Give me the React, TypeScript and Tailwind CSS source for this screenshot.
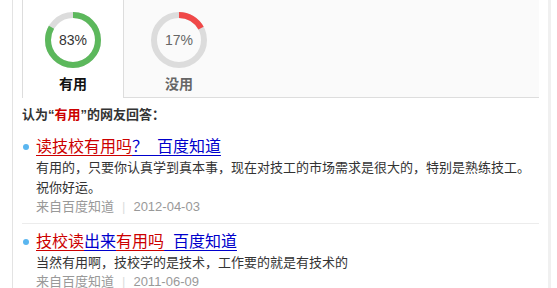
import React from 'react';

const FONT = { fontFamily: '"Liberation Sans", "Noto Sans CJK SC", sans-serif' };

const Donut = ({ pct, color, textColor }: { pct: number; color: string; textColor: string }) => {
  const r = 25;
  const c = 2 * Math.PI * r;
  return (
    <div className="relative w-[56px] h-[56px]">
      <svg width="56" height="56" viewBox="0 0 56 56">
        <circle cx="28" cy="28" r={r} fill="none" stroke="#dcdcdc" strokeWidth="6" />
        <circle
          cx="28"
          cy="28"
          r={r}
          fill="none"
          stroke={color}
          strokeWidth="6"
          strokeDasharray={`${(c * pct) / 100} ${c}`}
          transform="rotate(-90 28 28)"
        />
      </svg>
      <div className={`absolute inset-0 flex items-center justify-center text-[14px] ${textColor}`}>{pct}%</div>
    </div>
  );
};

type Part = { t: string; red?: boolean };

const Item = ({ title, body, date, last }: { title: Part[]; body: string; date: string; last?: boolean }) => (
  <div className={`pl-[14px] ${last ? '' : 'pb-[7px] border-b border-[#ececec]'}`}>
    <div className="flex items-center -ml-[14px]">
      <span className="w-[14px] flex">
        <span className="ml-[1px] w-[6px] h-[6px] rounded-full bg-[#5ab6f0]" />
      </span>
      <a className="text-[16px] leading-[22px] whitespace-pre">
        {title.map((p, i) => (
          <span
            key={i}
            className={`underline underline-offset-[3px] ${p.red ? 'text-[#c00] decoration-[#c00]' : 'text-[#00c] decoration-[#00c]'}`}
          >
            {p.t}
          </span>
        ))}
      </a>
    </div>
    <p className="text-[13px] leading-[20px] text-[#333]">{body}</p>
    <div className="text-[13px] leading-[18px] text-[#999] flex">
      <span>来自百度知道</span>
      <span className="mx-[8px] text-[#ddd]">|</span>
      <span>{date}</span>
    </div>
  </div>
);

export default function App() {
  return (
    <div className="w-[557px] h-[288px] overflow-hidden bg-white flex" style={FONT}>
      <div className="w-[12px] shrink-0" />
      <div className="w-[536px] shrink-0 border-l border-[#e3e3e3] px-[9px]">
        <div className="flex h-[98px]">
          <div className="w-[102px] bg-white border-l border-r border-[#dddddd] flex flex-col items-center pt-[12px]">
            <Donut pct={83} color="#5cb85c" textColor="text-[#333]" />
            <div className="mt-[6px] text-[14px] leading-[20px] font-bold text-[#111]">有用</div>
          </div>
          <div className="flex-1 bg-[#fafafa] border-b border-[#dddddd] flex">
            <div className="w-[110px] flex flex-col items-center pt-[12px]">
              <Donut pct={17} color="#f04848" textColor="text-[#666]" />
              <div className="mt-[6px] text-[14px] leading-[20px] font-bold text-[#666]">没用</div>
            </div>
          </div>
        </div>
        <div className="mt-[8px] text-[13px] leading-[18px] font-bold text-[#333]">
          认为“<span className="text-[#c00]">有用</span>”的网友回答：
        </div>
        <div className="mt-[12px]">
          <Item
            title={[{ t: '读技校有用吗', red: true }, { t: '？\u00a0\u00a0百度知道' }]}
            body="有用的，只要你认真学到真本事，现在对技工的市场需求是很大的，特别是熟练技工。祝你好运。"
            date="2012-04-03"
          />
        </div>
        <div className="mt-[7px]">
          <Item
            title={[
              { t: '技校读', red: true },
              { t: '出来' },
              { t: '有用吗', red: true },
              { t: '\u00a0\u00a0百度知道' },
            ]}
            body="当然有用啊，技校学的是技术，工作要的就是有技术的"
            date="2011-06-09"
            last
          />
        </div>
      </div>
      <div className="w-[3px] shrink-0 bg-[#f0f0f0]" />
    </div>
  );
}
